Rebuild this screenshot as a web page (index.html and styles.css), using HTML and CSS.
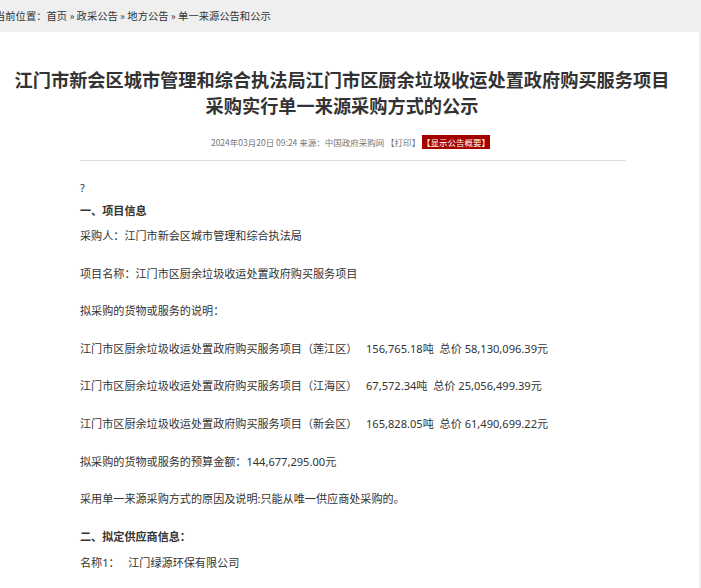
FILE: index.html
```html
<!DOCTYPE html>
<html lang="zh-CN">
<head>
<meta charset="utf-8">
<title>单一来源公告</title>
<link rel="stylesheet" href="styles.css">
</head>
<body>
<div class="crumb">当前位置：首页 » 政采公告 » 地方公告 » 单一来源公告和公示</div>
<div class="panel">
  <h1 class="title">江门市新会区城市管理和综合执法局江门市区厨余垃圾收运处置政府购买服务项目<br>采购实行单一来源采购方式的公示</h1>
  <div class="meta">2024年03月20日 09:24 来源：中国政府采购网 【打印】 <span class="tag">【显示公告概要】</span></div>
  <div class="rule"></div>
  <div class="content">
    <p class="q">?</p>
    <p class="b">一、项目信息</p>
    <p>采购人：江门市新会区城市管理和综合执法局</p>
    <p class="s">项目名称：江门市区厨余垃圾收运处置政府购买服务项目</p>
    <p class="s">拟采购的货物或服务的说明：</p>
    <p class="s">江门市区厨余垃圾收运处置政府购买服务项目（莲江区）&nbsp;&nbsp;&nbsp;156,765.18吨&nbsp;&nbsp;总价 58,130,096.39元</p>
    <p class="s">江门市区厨余垃圾收运处置政府购买服务项目（江海区）&nbsp;&nbsp;&nbsp;67,572.34吨&nbsp;&nbsp;总价 25,056,499.39元</p>
    <p class="s">江门市区厨余垃圾收运处置政府购买服务项目（新会区）&nbsp;&nbsp;&nbsp;165,828.05吨&nbsp;&nbsp;总价 61,490,699.22元</p>
    <p class="s">拟采购的货物或服务的预算金额：144,677,295.00元</p>
    <p class="s">采用单一来源采购方式的原因及说明:只能从唯一供应商处采购的。</p>
    <p class="s b">二、拟定供应商信息：</p>
    <p class="l">名称1：&nbsp;&nbsp;&nbsp;江门绿源环保有限公司</p>
  </div>
</div>
</body>
</html>
```
FILE: styles.css
```css
html, body {
  margin: 0;
  padding: 0;
}
body {
  background: #efefef;
  font-family: "Noto Sans CJK SC", "Noto Sans", sans-serif;
  color: #333;
  overflow: hidden;
  height: 588px;
}
.crumb {
  height: 32px;
  line-height: 31px;
  font-size: 10.3px;
  color: #333;
  text-indent: -5px;
  white-space: nowrap;
}
.panel {
  background: #fff;
  width: 699px;
  height: 556px;
  overflow: hidden;
}
.title {
  margin: 0;
  padding-top: 34px;
  padding-right: 15px;
  font-size: 18.2px;
  line-height: 26px;
  font-weight: bold;
  text-align: center;
  color: #333;
  white-space: nowrap;
}
.meta {
  margin-top: 18px;
  font-size: 8.5px;
  line-height: 12px;
  color: #777;
  text-align: center;
  padding-left: 2px;
}
.tag {
  background: #a30000;
  color: #fff;
  padding: 1px 0;
}
.rule {
  margin: 12px 73px 0 80px;
  border-top: 1px solid #ddd;
}
.content {
  padding-left: 80px;
  padding-top: 16px;
  font-family: "Noto Sans", "Noto Sans CJK SC", sans-serif;
  font-size: 11.1px;
  color: #333;
}
.content p {
  margin: 0;
  line-height: 25px;
  white-space: nowrap;
}
.content p.q {
  line-height: 21px;
}
.content p.s {
  margin-top: 12.6px;
}
.content p.l {
  margin-top: 1px;
}
.content p.b {
  font-weight: bold;
}
```
